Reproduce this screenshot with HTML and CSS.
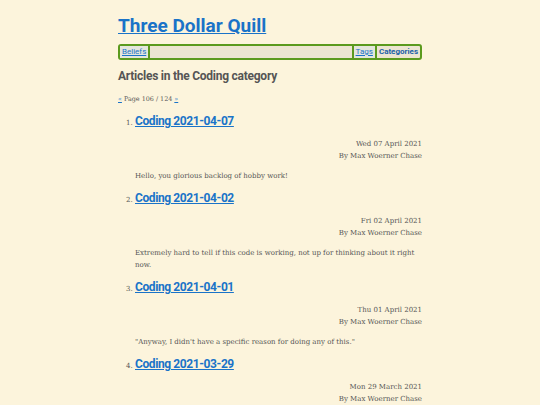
FILE: index.html
```html
<!DOCTYPE html>
<html>
<head>
<meta charset="utf-8">
<link rel="stylesheet" href="styles.css">
</head>
<body>
<div class="page">
  <h1 class="site-title"><a href="#">Three Dollar Quill</a></h1>
  <nav class="nav">
    <a class="nav-item nav-left nav-link" href="#">Beliefs</a>
    <span class="nav-spacer"></span>
    <a class="nav-item nav-right nav-link" href="#">Tags</a>
    <span class="nav-item nav-right nav-current">Categories</span>
  </nav>
  <h2 class="section-title">Articles in the Coding category</h2>
  <p class="pager"><a href="#">«</a> Page 106 / 124 <a href="#">»</a></p>
  <ol class="articles" start="1">
    <li class="article">
      <h3 class="article-title"><a href="#">Coding 2021-04-07</a></h3>
      <div class="meta">
        <div>Wed 07 April 2021</div>
        <div>By Max Woerner Chase</div>
      </div>
      <p class="summary">Hello, you glorious backlog of hobby work!</p>
    </li>
    <li class="article">
      <h3 class="article-title"><a href="#">Coding 2021-04-02</a></h3>
      <div class="meta">
        <div>Fri 02 April 2021</div>
        <div>By Max Woerner Chase</div>
      </div>
      <p class="summary">Extremely hard to tell if this code is working, not up for thinking about it right now.</p>
    </li>
    <li class="article">
      <h3 class="article-title"><a href="#">Coding 2021-04-01</a></h3>
      <div class="meta">
        <div>Thu 01 April 2021</div>
        <div>By Max Woerner Chase</div>
      </div>
      <p class="summary">"Anyway, I didn't have a specific reason for doing any of this."</p>
    </li>
    <li class="article">
      <h3 class="article-title"><a href="#">Coding 2021-03-29</a></h3>
      <div class="meta">
        <div>Mon 29 March 2021</div>
        <div>By Max Woerner Chase</div>
      </div>
    </li>
  </ol>
</div>
</body>
</html>
```
FILE: styles.css
```css
html, body {
  margin: 0;
  padding: 0;
  background: #fcf4dc;
}
body {
  font-family: "DejaVu Serif", serif;
  color: #555555;
}
.page {
  width: 304px;
  margin: 0 auto;
  padding-top: 14px;
}
a {
  color: #1a73c8;
}
.site-title {
  font-family: Roboto, sans-serif;
  font-size: 19px;
  font-weight: 700;
  line-height: 24px;
  margin: 0 0 6px 0;
}
.nav {
  display: flex;
  align-items: stretch;
  border: 2px solid #5b9a1e;
  border-radius: 3px;
  background: #ece5d1;
  font-family: Roboto, sans-serif;
  font-size: 8px;
  line-height: 12px;
}
.nav-item {
  padding: 0 2px;
}
.nav-link {
  background: #e4e6dc;
}
.nav-left {
  border-right: 2px solid #5b9a1e;
}
.nav-right {
  border-left: 2px solid #5b9a1e;
}
.nav-spacer {
  flex: 1;
}
.nav-current {
  font-weight: 700;
  color: #1a5fa8;
}
.section-title {
  font-family: Roboto, sans-serif;
  font-size: 12px;
  letter-spacing: -0.25px;
  font-weight: 700;
  line-height: 16px;
  margin: 8px 0 10px 0;
  color: #555;
}
.pager {
  font-size: 6.4px;
  line-height: 10px;
  margin: 0 0 8px 0;
}
.articles {
  margin: 0;
  padding-left: 17px;
  font-size: 7px;
}
.article {
  margin: 0;
}
.article-title {
  font-family: Roboto, sans-serif;
  font-size: 12px;
  letter-spacing: -0.4px;
  font-weight: 700;
  line-height: 18px;
  margin: 0 0 8px 0;
}
.meta {
  text-align: right;
  font-size: 7px;
  line-height: 12px;
  margin-bottom: 0;
}
.summary {
  font-size: 7px;
  line-height: 12px;
  margin: 8px 0 7px 0;
}
```
